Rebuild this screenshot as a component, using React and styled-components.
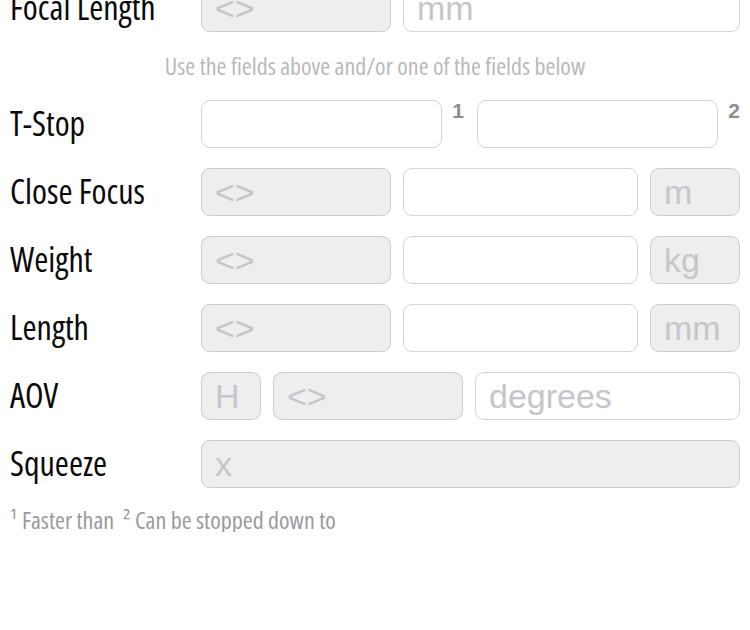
import React from "react";
import styled, { createGlobalStyle } from "styled-components";

const Global = createGlobalStyle`
  html, body { margin: 0; padding: 0; background: #ffffff; }
  body { font-family: "Open Sans", "DejaVu Sans Condensed", sans-serif; font-stretch: 75%; }
  * { box-sizing: border-box; }
`;

const Page = styled.div`
  margin-top: -16px;
  padding: 0 10px;
  display: flex;
  flex-direction: column;
  gap: 20px;
`;

const Row = styled.div`
  display: grid;
  grid-template-columns: 191px minmax(0, 1fr);
  align-items: center;
  height: 48px;
`;

const Label = styled.div`
  font-family: "Open Sans", "DejaVu Sans Condensed", sans-serif;
  font-stretch: 75%;
  font-weight: 400;
  font-size: 34px;
  line-height: 40px;
  margin-top: -3px;
  color: #0a0a0a;
  white-space: nowrap;
`;

const Fields = styled.div`
  display: flex;
  align-items: stretch;
  gap: ${(p) => (p.$gap != null ? p.$gap : 12)}px;
  height: 48px;
  min-width: 0;
`;

const Field = styled.input`
  font-family: "Liberation Sans", Arial, sans-serif;
  font-stretch: 100%;
  font-size: 34px;
  height: 48px;
  padding: 0 13px;
  margin: 0;
  border-radius: 9px;
  border: 1px solid ${(p) => (p.$locked ? "#cdcdcd" : "#d3d3d3")};
  background: ${(p) => (p.$locked ? "#eeeeee" : "#ffffff")};
  color: #c6c6ca;
  -webkit-text-fill-color: #c6c6ca;
  outline: none;
  min-width: 0;
  ${(p) => (p.$w ? `flex: 0 0 ${p.$w}px; width: ${p.$w}px;` : `flex: 1 1 0; width: 0;`)}
  &::placeholder {
    color: #c6c6ca;
    -webkit-text-fill-color: #c6c6ca;
    opacity: 1;
  }
`;

const Sup = styled.span`
  font-family: "Liberation Sans", Arial, sans-serif;
  font-stretch: 100%;
  font-weight: bold;
  font-size: 21px;
  line-height: 1;
  color: #8e8e8e;
  align-self: flex-start;
  margin: 0 ${(p) => p.$after}px 0 10px;
`;

const Hint = styled.div`
  height: 28px;
  line-height: 28px;
  text-align: center;
  font-size: 24px;
  color: #b9b9b9;
`;

const Footnote = styled.div`
  height: 24px;
  line-height: 24px;
  font-size: 24px;
  color: #9a9a9a;
  white-space: pre;
`;

const Locked = (props) => <Field readOnly $locked {...props} />;

export default function App() {
  return (
    <>
      <Global />
      <Page>
        <Row>
          <Label>Focal Length</Label>
          <Fields>
            <Locked $w={190} defaultValue="<>" />
            <Field placeholder="mm" />
          </Fields>
        </Row>
        <Hint>Use the fields above and/or one of the fields below</Hint>
        <Row>
          <Label>T-Stop</Label>
          <Fields $gap={0}>
            <Field />
            <Sup $after={13}>1</Sup>
            <Field />
            <Sup $after={0}>2</Sup>
          </Fields>
        </Row>
        <Row>
          <Label>Close Focus</Label>
          <Fields>
            <Locked $w={190} defaultValue="<>" />
            <Field />
            <Locked $w={90} defaultValue="m" />
          </Fields>
        </Row>
        <Row>
          <Label>Weight</Label>
          <Fields>
            <Locked $w={190} defaultValue="<>" />
            <Field />
            <Locked $w={90} defaultValue="kg" />
          </Fields>
        </Row>
        <Row>
          <Label>Length</Label>
          <Fields>
            <Locked $w={190} defaultValue="<>" />
            <Field />
            <Locked $w={90} defaultValue="mm" />
          </Fields>
        </Row>
        <Row>
          <Label>AOV</Label>
          <Fields>
            <Locked $w={60} defaultValue="H" />
            <Locked $w={190} defaultValue="<>" />
            <Field placeholder="degrees" />
          </Fields>
        </Row>
        <Row>
          <Label>Squeeze</Label>
          <Fields>
            <Locked defaultValue="x" />
          </Fields>
        </Row>
        <Footnote>{"¹ Faster than  ² Can be stopped down to"}</Footnote>
      </Page>
    </>
  );
}
